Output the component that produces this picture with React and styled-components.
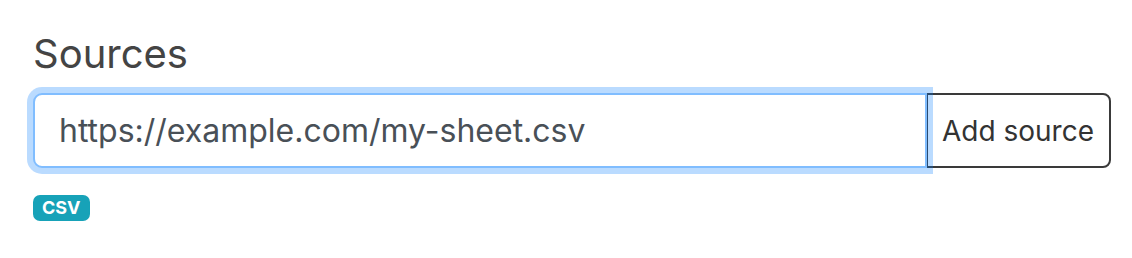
import React from 'react';
import styled, { createGlobalStyle } from 'styled-components';

const GlobalStyle = createGlobalStyle`
  body {
    margin: 0;
    background: #ffffff;
    font-family: Inter, "Liberation Sans", sans-serif;
  }
`;

const Page = styled.div`
  padding: 30px 21px 0 33px;
`;

const Heading = styled.h2`
  margin: 0 0 15px;
  font-size: 40px;
  font-weight: 400;
  line-height: 48px;
  color: #444444;
`;

const InputGroup = styled.div`
  display: flex;
  align-items: stretch;
  height: 75px;
`;

const SourceInput = styled.input`
  position: relative;
  z-index: 2;
  flex: 1;
  min-width: 0;
  box-sizing: border-box;
  margin: 0;
  padding: 0 24px;

  font-family: inherit;
  font-size: 32px;
  color: #495057;

  background: #ffffff;
  border: 2px solid #80bdff;
  border-radius: 9px 0 0 9px;
  outline: none;
  box-shadow: 0 0 0 6px rgba(0, 123, 255, 0.27);
`;

const AddButton = styled.button`
  box-sizing: border-box;
  margin: 0 0 0 -1px;
  padding: 0 15px 0 14px;

  font-family: inherit;
  font-size: 28px;
  color: #333333;

  background: #ffffff;
  border: 2px solid #3a3a3a;
  border-radius: 0 8px 8px 0;
  cursor: pointer;
`;

const Badges = styled.div`
  display: flex;
  gap: 8px;
  margin-top: 27px;
`;

const Badge = styled.span`
  display: inline-block;
  padding: 3px 9px 4px;
  font-size: 18px;
  font-weight: 700;
  line-height: 19px;
  color: #ffffff;
  background: ${(p) => p.color};
  border-radius: 7px;
`;

const App = () => (
  <Page>
    <GlobalStyle />
    <Heading>Sources</Heading>
    <InputGroup>
      <SourceInput defaultValue="https://example.com/my-sheet.csv" />
      <AddButton>Add source</AddButton>
    </InputGroup>
    <Badges>
      <Badge color="#17a2b8">CSV</Badge>
    </Badges>
  </Page>
);

export default App;
